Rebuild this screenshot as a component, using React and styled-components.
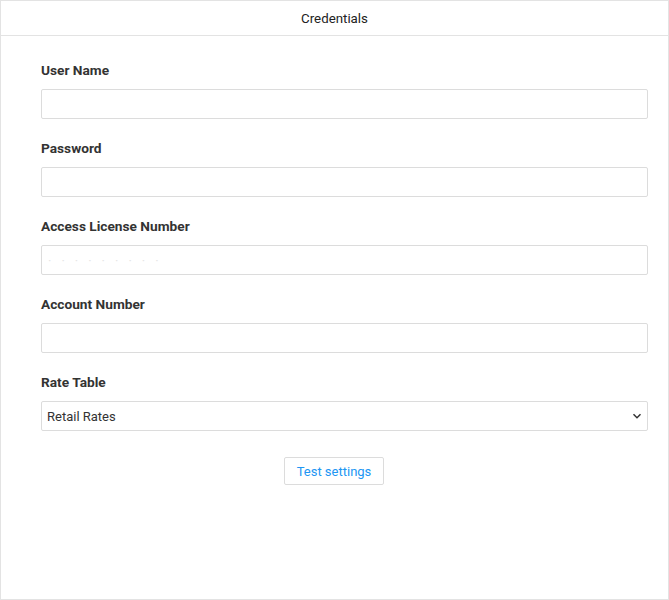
import React from "react";
import styled, { createGlobalStyle } from "styled-components";

const Global = createGlobalStyle`
  html, body { margin: 0; padding: 0; background: #fff; }
  body { font-family: Roboto, "Liberation Sans", sans-serif; }
  * { box-sizing: border-box; }
`;

const Panel = styled.div`
  width: 669px;
  height: 600px;
  border: 1px solid #e3e3e3;
  display: flex;
  flex-direction: column;
`;

const Header = styled.div`
  height: 35px;
  border-bottom: 1px solid #e3e3e3;
  display: flex;
  align-items: center;
  justify-content: center;
  font-size: 13.3px;
  color: #222;
`;

const Body = styled.div`
  padding: 26px 20px 0 40px;
  display: flex;
  flex-direction: column;
`;

const Field = styled.div`
  display: flex;
  flex-direction: column;
  margin-bottom: 21px;
`;

const Label = styled.label`
  font-size: 13.7px;
  line-height: 16px;
  font-weight: 700;
  color: #333;
  margin-bottom: 11px;
`;

const Input = styled.input`
  height: 30px;
  width: 100%;
  border: 1px solid #dcdcdc;
  border-radius: 2px;
  padding: 0 6px;
  font: inherit;
  font-size: 13px;
  color: #333;
  outline: none;
  &::placeholder { color: #e6e6e6; letter-spacing: 10px; }
`;

const SelectWrap = styled.div`
  position: relative;
  height: 30px;
`;

const Select = styled.select`
  appearance: none;
  width: 100%;
  height: 30px;
  border: 1px solid #dcdcdc;
  border-radius: 2px;
  padding: 0 5px;
  background: #fff;
  font-family: Roboto, "Liberation Sans", sans-serif;
  font-size: 13px;
  color: #333;
  outline: none;
`;

const Chevron = styled.svg`
  position: absolute;
  right: 6px;
  top: 10px;
  pointer-events: none;
`;

const Actions = styled.div`
  display: flex;
  justify-content: center;
  margin-top: 5px;
  padding-right: 1px;
`;

const Button = styled.button`
  height: 28px;
  padding: 0 12px;
  background: #fff;
  border: 1px solid #dcdcdc;
  border-radius: 2px;
  color: #2196f3;
  font-family: Roboto, "Liberation Sans", sans-serif;
  font-size: 13px;
  cursor: pointer;
`;

const TextField = ({ label, placeholder }) => (
  <Field>
    <Label>{label}</Label>
    <Input placeholder={placeholder} />
  </Field>
);

export default function App() {
  return (
    <>
      <Global />
      <Panel>
        <Header>Credentials</Header>
        <Body>
          <TextField label="User Name" />
          <TextField label="Password" />
          <TextField label="Access License Number" placeholder="·········" />
          <TextField label="Account Number" />
          <Field>
            <Label>Rate Table</Label>
            <SelectWrap>
              <Select defaultValue="retail">
                <option value="retail">Retail Rates</option>
                <option value="daily">Daily Rates</option>
              </Select>
              <Chevron width="10" height="10" viewBox="0 0 10 10">
                <path d="M1.5 3.2 L5 6.7 L8.5 3.2" fill="none" stroke="#333" strokeWidth="1.5" />
              </Chevron>
            </SelectWrap>
          </Field>
        </Body>
        <Actions>
          <Button>Test settings</Button>
        </Actions>
      </Panel>
    </>
  );
}
